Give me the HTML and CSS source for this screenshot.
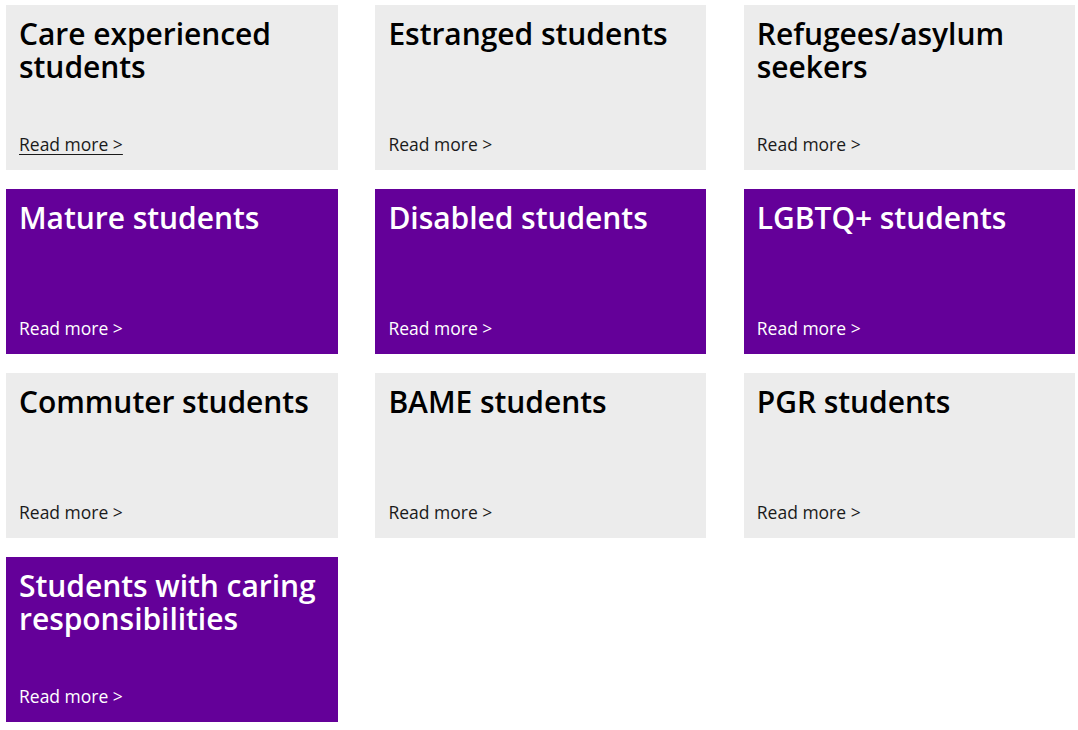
FILE: index.html
```html
<!DOCTYPE html>
<html lang="en">
<head>
<meta charset="utf-8">
<title>Student groups</title>
<link rel="stylesheet" href="styles.css">
</head>
<body>
<div class="grid">
  <div class="card grey"><h2 class="title">Care experienced students</h2><a class="more underline" href="#">Read more &gt;</a></div>
  <div class="card grey"><h2 class="title">Estranged students</h2><a class="more" href="#">Read more &gt;</a></div>
  <div class="card grey"><h2 class="title">Refugees/asylum seekers</h2><a class="more" href="#">Read more &gt;</a></div>
  <div class="card purple"><h2 class="title">Mature students</h2><a class="more" href="#">Read more &gt;</a></div>
  <div class="card purple"><h2 class="title">Disabled students</h2><a class="more" href="#">Read more &gt;</a></div>
  <div class="card purple"><h2 class="title">LGBTQ+ students</h2><a class="more" href="#">Read more &gt;</a></div>
  <div class="card grey"><h2 class="title">Commuter students</h2><a class="more" href="#">Read more &gt;</a></div>
  <div class="card grey"><h2 class="title">BAME students</h2><a class="more" href="#">Read more &gt;</a></div>
  <div class="card grey"><h2 class="title">PGR students</h2><a class="more" href="#">Read more &gt;</a></div>
  <div class="card purple"><h2 class="title">Students with caring responsibilities</h2><a class="more" href="#">Read more &gt;</a></div>
</div>
</body>
</html>
```
FILE: styles.css
```css
html, body {
  margin: 0;
  padding: 0;
  background: #ffffff;
  font-family: "Open Sans", "Noto Sans", sans-serif;
}
.grid {
  width: 1069px;
  margin: 5px 0 0 6px;
  display: grid;
  grid-template-columns: 332px 331px 331px;
  column-gap: 37.4px;
  row-gap: 19px;
  grid-auto-rows: 165px;
}
.card {
  display: flex;
  flex-direction: column;
  box-sizing: border-box;
  padding: 12px 13px 12px 13px;
}
.grey {
  background: #ececec;
  color: #000000;
}
.purple {
  background: #640099;
  color: #ffffff;
}
.title {
  margin: 0;
  font-size: 30px;
  line-height: 33px;
  font-weight: 600;
  letter-spacing: -0.05px;
}
.more {
  margin-top: auto;
  font-size: 17.5px;
  line-height: 27px;
  text-decoration: none;
  color: inherit;
}
.grey .more {
  color: #1a1a1a;
}
.underline {
  text-decoration: underline;
  text-underline-offset: 3px;
  text-decoration-thickness: 1px;
}
```
